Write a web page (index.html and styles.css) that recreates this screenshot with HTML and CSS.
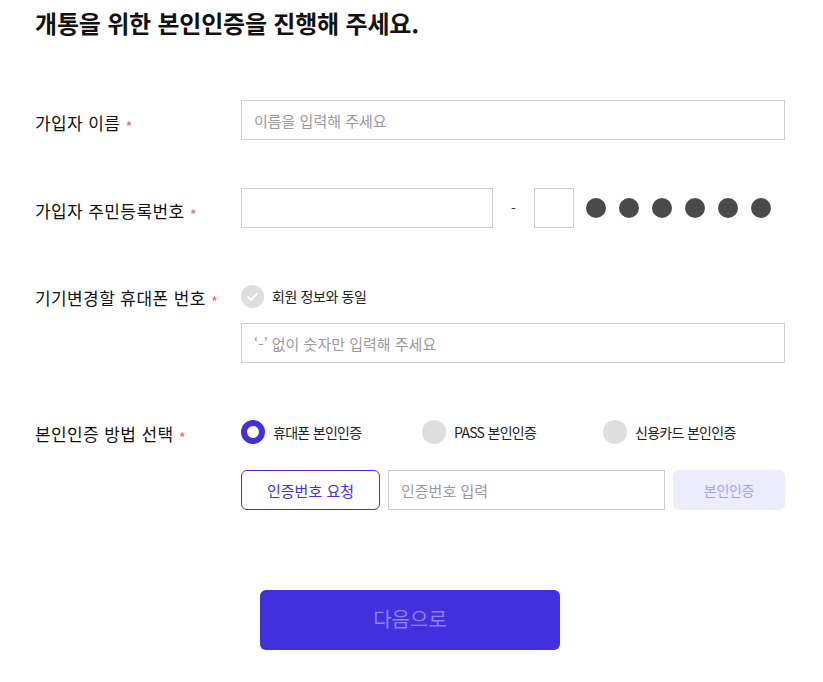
FILE: index.html
```html
<!DOCTYPE html>
<html lang="ko">
<head>
<meta charset="utf-8">
<title>본인인증</title>
<link rel="stylesheet" href="styles.css">
</head>
<body>
<div class="page">
  <h1 class="title">개통을 위한 본인인증을 진행해 주세요.</h1>

  <div class="row row-name">
    <div class="label">가입자 이름 <span class="req">*</span></div>
    <div class="field">
      <input class="input full" type="text" placeholder="이름을 입력해 주세요">
    </div>
  </div>

  <div class="row row-rrn">
    <div class="label">가입자 주민등록번호 <span class="req">*</span></div>
    <div class="field rrn">
      <input class="input rrn-front" type="text">
      <span class="dash">-</span>
      <input class="input rrn-digit" type="text">
      <div class="dots">
        <span class="dot"></span><span class="dot"></span><span class="dot"></span>
        <span class="dot"></span><span class="dot"></span><span class="dot"></span>
      </div>
    </div>
  </div>

  <div class="row row-phone">
    <div class="label label-top">기기변경할 휴대폰 번호 <span class="req">*</span></div>
    <div class="field">
      <div class="check-line">
        <span class="check">
          <svg width="23" height="23" viewBox="0 0 23 23"><path d="M7 11.8 L10.2 14.8 L16 8.6" fill="none" stroke="#fff" stroke-width="1.8" stroke-linecap="round" stroke-linejoin="round"/></svg>
        </span>
        <span class="check-text">회원 정보와 동일</span>
      </div>
      <input class="input full phone" type="text" placeholder="‘-’ 없이 숫자만 입력해 주세요">
    </div>
  </div>

  <div class="row row-method">
    <div class="label label-top">본인인증 방법 선택 <span class="req">*</span></div>
    <div class="field">
      <div class="radios">
        <label class="radio-item"><span class="radio on"></span><span class="radio-text">휴대폰 본인인증</span></label>
        <label class="radio-item"><span class="radio"></span><span class="radio-text">PASS 본인인증</span></label>
        <label class="radio-item"><span class="radio"></span><span class="radio-text">신용카드 본인인증</span></label>
      </div>
      <div class="verify">
        <button class="btn-request" type="button">인증번호 요청</button>
        <input class="input code" type="text" placeholder="인증번호 입력">
        <button class="btn-confirm" type="button">본인인증</button>
      </div>
    </div>
  </div>

  <div class="next-wrap">
    <button class="btn-next" type="button">다음으로</button>
  </div>
</div>
</body>
</html>
```

FILE: styles.css
```css
* { box-sizing: border-box; }
html, body { margin: 0; padding: 0; background: #fff; }
body {
  font-family: "Noto Sans CJK KR", "Noto Sans", sans-serif;
  color: #111;
}
.page {
  width: 785px;
  padding-left: 35px;
}
.title {
  margin: 0;
  padding-top: 6px;
  height: 40px;
  font-size: 24px;
  line-height: 34px;
  font-weight: 700;
  color: #111;
  letter-spacing: -0.2px;
}
.row {
  display: grid;
  grid-template-columns: 206px 544px;
  align-items: start;
}
.row-name { margin-top: 60px; }
.row-rrn { margin-top: 48px; }
.row-phone { margin-top: 56px; }
.row-method { margin-top: 57px; }

.label {
  height: 40px;
  font-size: 17px;
  line-height: 34px;
  padding-top: 6px;
  color: #111;
  white-space: nowrap;
  letter-spacing: 0.4px;
}
.label-top {
  height: 24px;
  line-height: 24px;
  padding-top: 2px;
}
.req {
  display: inline-block;
  color: #ec6a6a;
  font-size: 15px;
  line-height: 0;
  position: relative;
  top: 3px;
  letter-spacing: 0;
}
.field { display: flex; flex-direction: column; }

.input {
  height: 40px;
  border: 1px solid #cfcfcf;
  border-radius: 0;
  padding: 0 12px;
  font-family: inherit;
  font-size: 15px;
  color: #333;
  background: #fff;
  outline: none;
}
.input::placeholder { color: #9a9a9a; }
.full { width: 544px; }

.rrn { flex-direction: row; align-items: center; }
.rrn-front { width: 252px; }
.dash {
  width: 41px;
  text-align: center;
  font-size: 14px;
  color: #333;
}
.rrn-digit { width: 40px; padding: 0; }
.dots { display: flex; gap: 13px; margin-left: 12px; }
.dot {
  width: 20px;
  height: 20px;
  border-radius: 50%;
  background: #4a4a4a;
}

.check-line {
  display: flex;
  align-items: center;
  height: 24px;
}
.check {
  width: 23px;
  height: 23px;
  border-radius: 50%;
  background: #dedede;
  display: flex;
}
.check-text {
  margin-left: 8px;
  font-size: 14px;
  color: #222;
  letter-spacing: -0.4px;
}
.phone { margin-top: 15px; }

.radios {
  display: grid;
  grid-template-columns: 181px 181px 182px;
  height: 24px;
}
.radio-item { display: flex; align-items: center; }
.radio {
  width: 24px;
  height: 24px;
  border-radius: 50%;
  background: #dedede;
  flex: none;
}
.radio.on {
  background: #fff;
  border: 6px solid #4030de;
}
.radio-text {
  margin-left: 8px;
  font-size: 14px;
  color: #222;
  letter-spacing: -0.7px;
}

.verify {
  display: flex;
  gap: 8px;
  margin-top: 26px;
}
.btn-request {
  width: 139px;
  height: 40px;
  border: 1px solid #4030de;
  border-radius: 6px;
  background: #fff;
  color: #4030de;
  font-family: inherit;
  font-size: 15px;
}
.code { width: 277px; }
.btn-confirm {
  width: 112px;
  height: 40px;
  border: none;
  border-radius: 6px;
  background: #ececfc;
  color: #a7a2ec;
  font-family: inherit;
  font-size: 14px;
  letter-spacing: -0.3px;
}

.next-wrap {
  display: flex;
  justify-content: center;
  width: 750px;
  margin-top: 80px;
}
.btn-next {
  width: 300px;
  height: 60px;
  padding: 0 0 3px;
  border: none;
  border-radius: 6px;
  background: #4030de;
  color: #8e86ea;
  font-family: inherit;
  font-size: 20px;
}
```
